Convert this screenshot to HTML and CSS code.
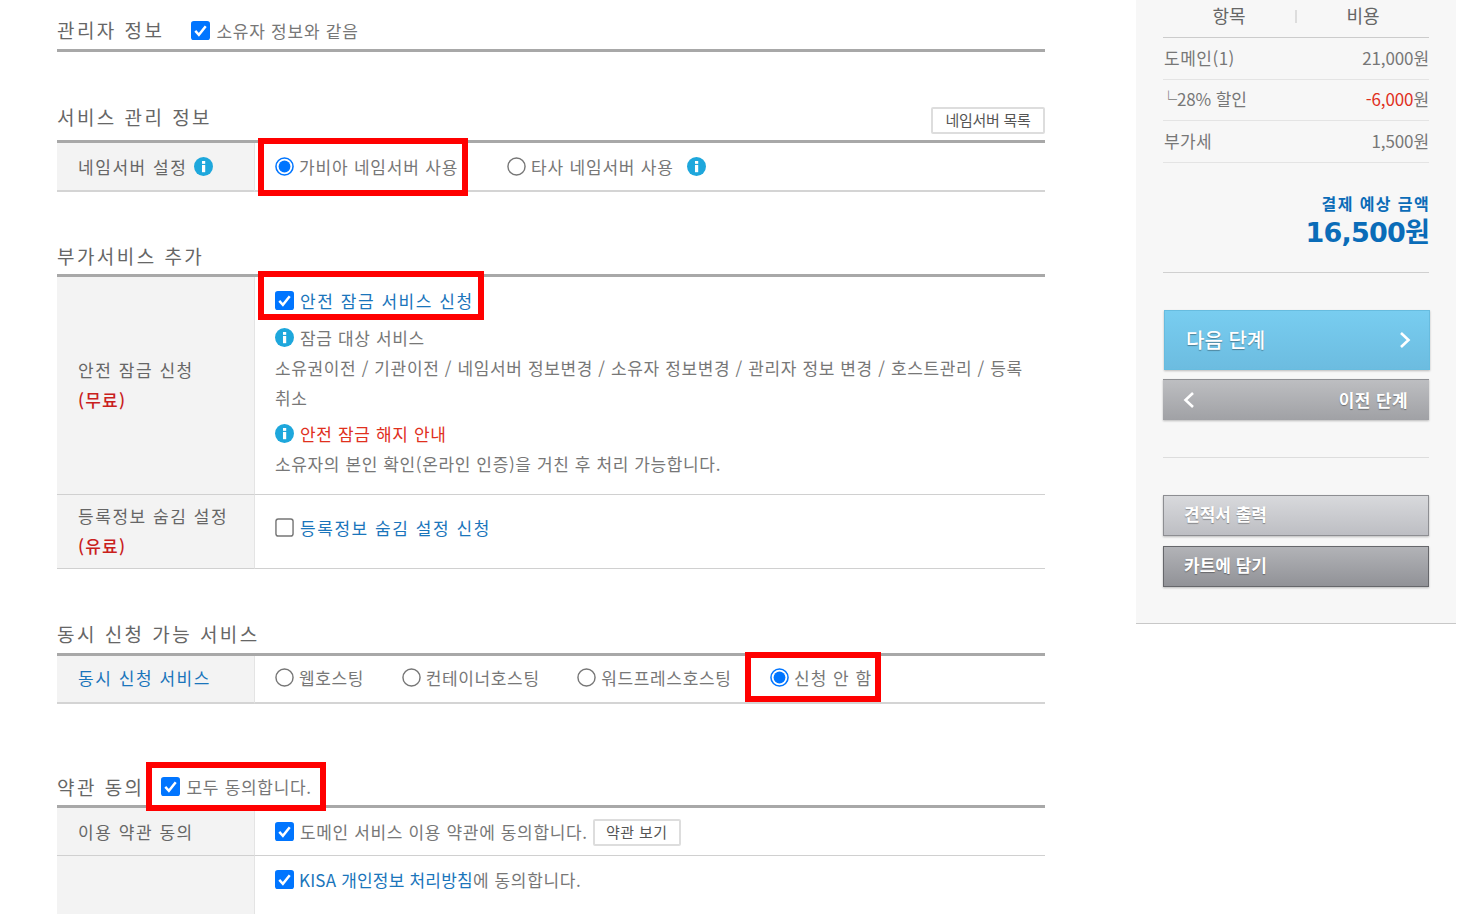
FILE: index.html
```html
<!DOCTYPE html>
<html lang="ko">
<head>
<meta charset="utf-8">
<title>도메인 신청</title>
<link rel="stylesheet" href="styles.css">
</head>
<body>
<svg class="defs" width="0" height="0" aria-hidden="true">
  <symbol id="chk" viewBox="0 0 20 20"><rect width="20" height="20" rx="3" fill="#0075ff"/><path d="M4.5 10.5 8.3 14.5 15.5 5.5" fill="none" stroke="#fff" stroke-width="2.6"/></symbol>
  <symbol id="unchk" viewBox="0 0 20 20"><rect x="1" y="1" width="18" height="18" rx="2.5" fill="#fff" stroke="#767676" stroke-width="1.5"/></symbol>
  <symbol id="on" viewBox="0 0 20 20"><circle cx="10" cy="10" r="9" fill="#fff" stroke="#0075ff" stroke-width="1.6"/><circle cx="10" cy="10" r="6.2" fill="#0075ff"/></symbol>
  <symbol id="off" viewBox="0 0 20 20"><circle cx="10" cy="10" r="9" fill="#fff" stroke="#767676" stroke-width="1.5"/></symbol>
  <symbol id="info" viewBox="0 0 20 20"><circle cx="10" cy="10" r="10" fill="#1ea7dc"/><rect x="8.4" y="8.4" width="3.4" height="7.6" fill="#fff"/><rect x="8.4" y="4.2" width="3.4" height="3" fill="#fff"/></symbol>
</svg>
<div class="page">
  <main class="form">
    <div class="head head-1">
      <h2 class="title">관리자 정보</h2>
      <label class="opt opt-same"><svg class="box"><use href="#chk"/></svg><span>소유자 정보와 같음</span></label>
    </div>

    <div class="head head-2">
      <h2 class="title">서비스 관리 정보</h2>
      <button class="mini mini-ns">네임서버 목록</button>
    </div>
    <div class="row row-ns">
      <div class="th">네임서버 설정 <svg class="info"><use href="#info"/></svg></div>
      <div class="td td-line td-ns">
        <label class="opt opt-radio"><svg class="box"><use href="#on"/></svg><span>가비아 네임서버 사용</span><i class="mark mark-gabia"></i></label>
        <label class="opt opt-radio"><svg class="box"><use href="#off"/></svg><span>타사 네임서버 사용</span><svg class="info info-other"><use href="#info"/></svg></label>
      </div>
    </div>

    <div class="head head-3"><h2 class="title">부가서비스 추가</h2></div>
    <div class="row row-lock">
      <div class="th th-2"><span>안전 잠금 신청</span><em>(무료)</em></div>
      <div class="td td-lock">
        <label class="opt opt-blue"><svg class="box"><use href="#chk"/></svg><span>안전 잠금 서비스 신청</span><i class="mark mark-lock"></i></label>
        <p class="note note-1"><svg class="info"><use href="#info"/></svg><span>잠금 대상 서비스</span></p>
        <p class="para">소유권이전 / 기관이전 / 네임서버 정보변경 / 소유자 정보변경 / 관리자 정보 변경 / 호스트관리 / 등록 취소</p>
        <p class="note note-2"><svg class="info"><use href="#info"/></svg><span class="red">안전 잠금 해지 안내</span></p>
        <p class="para">소유자의 본인 확인(온라인 인증)을 거친 후 처리 가능합니다.</p>
      </div>
    </div>
    <div class="row row-hide">
      <div class="th th-2"><span>등록정보 숨김 설정</span><em>(유료)</em></div>
      <div class="td td-line td-hide">
        <label class="opt opt-blue"><svg class="box"><use href="#unchk"/></svg><span>등록정보 숨김 설정 신청</span></label>
      </div>
    </div>

    <div class="head head-4"><h2 class="title">동시 신청 가능 서비스</h2></div>
    <div class="row row-multi">
      <div class="th th-blue">동시 신청 서비스</div>
      <div class="td td-line td-tight">
        <label class="opt opt-radio"><svg class="box"><use href="#off"/></svg><span>웹호스팅</span></label>
        <label class="opt opt-radio"><svg class="box"><use href="#off"/></svg><span>컨테이너호스팅</span></label>
        <label class="opt opt-radio"><svg class="box"><use href="#off"/></svg><span>워드프레스호스팅</span></label>
        <label class="opt opt-radio opt-none"><svg class="box"><use href="#on"/></svg><span>신청 안 함</span><i class="mark mark-none"></i></label>
      </div>
    </div>

    <div class="head head-5">
      <h2 class="title">약관 동의</h2>
      <label class="opt opt-all"><svg class="box"><use href="#chk"/></svg><span>모두 동의합니다.</span><i class="mark mark-all"></i></label>
    </div>
    <div class="row row-terms">
      <div class="th">이용 약관 동의</div>
      <div class="td td-line">
        <label class="opt opt-tight"><svg class="box"><use href="#chk"/></svg><span>도메인 서비스 이용 약관에 동의합니다.</span></label>
        <button class="mini mini-terms">약관 보기</button>
      </div>
    </div>
    <div class="row row-kisa">
      <div class="th"></div>
      <div class="td td-kisa">
        <label class="opt opt-radio"><svg class="box"><use href="#chk"/></svg><span><b class="link">KISA 개인정보 처리방침</b>에 동의합니다.</span></label>
      </div>
    </div>
  </main>

  <aside class="side">
    <div class="cols"><span>항목</span><i class="cols-bar"></i><span>비용</span></div>
    <div class="line"><span class="ko-1">도메인(1)</span><span>21,000원</span></div>
    <div class="line"><span class="sale">└28% 할인</span><span><span class="red">-6,000</span>원</span></div>
    <div class="line"><span class="ko-2">부가세</span><span>1,500원</span></div>
    <div class="total">
      <div class="total-label">결제 예상 금액</div>
      <div class="total-num">16,500원</div>
    </div>
    <a class="btn btn-next"><span>다음 단계</span><svg class="chev" viewBox="0 0 12 18"><path d="M2 2 9.5 9 2 16" fill="none" stroke="#fff" stroke-width="2.6"/></svg></a>
    <a class="btn btn-prev"><svg class="chev" viewBox="0 0 12 18"><path d="M10 2 2.5 9 10 16" fill="none" stroke="#fff" stroke-width="2.6"/></svg><span>이전 단계</span></a>
    <div class="sep"></div>
    <a class="btn btn-quote">견적서 출력</a>
    <a class="btn btn-cart">카트에 담기</a>
  </aside>
</div>
</body>
</html>
```

FILE: styles.css
```css
* { box-sizing: border-box; }
html, body { margin: 0; padding: 0; height: 914px; overflow: hidden; background: #fff; }
body { font-family: "Noto Sans CJK KR", "Noto Sans", sans-serif; font-size: 16px; color: #777; }
.defs { position: absolute; }
p { margin: 0; }
em { font-style: normal; }
.page { display: flex; padding-left: 57px; height: 914px; align-items: flex-start; }
.form { width: 988px; flex: none; }

.head { display: flex; align-items: center; border-bottom: 3px solid #a8a8a8; }
.head-1 { height: 52px; padding-top: 10px; }
.head-2 { height: 91px; padding-top: 41px; justify-content: space-between; }
.head-3 { height: 85px; padding-top: 44px; }
.head-4 { height: 87px; padding-top: 44px; }
.head-5 { height: 104px; padding-top: 64px; }
.title { margin: 0; font-size: 19px; font-weight: 400; color: #666; letter-spacing: 2.45px; white-space: nowrap; }

.row { display: flex; }
.row-ns { height: 49px; }
.row-lock { height: 218px; }
.row-hide { height: 74px; }
.row-multi { height: 48px; }
.row-terms { height: 48px; }
.row-kisa { height: 60px; }

.th { width: 198px; flex: none; background: #f3f3f3; border-right: 1px solid #e4e4e4; border-bottom: 1px solid #d0d0d0; padding-left: 21px; display: flex; align-items: center; color: #666; font-size: 17px; letter-spacing: 1.55px; gap: 7px; }
.th-2 { flex-direction: column; align-items: flex-start; justify-content: center; gap: 5px; padding-bottom: 2px; }
.th-2 em { color: #c9201c; font-weight: 500; font-size: 17px; letter-spacing: 1.2px; }
.th-blue { color: #1a75bb; padding-bottom: 3px; }
.row-ns .th, .row-ns .td, .row-multi .td, .row-multi .th { border-bottom: 2px solid #d4d4d4; }
.td { flex: 1; border-bottom: 1px solid #d0d0d0; padding-left: 20px; min-width: 0; }
.td-line { display: flex; align-items: center; gap: 39px; }
.td-ns { gap: 49px; }
.td-ns .opt { letter-spacing: .8px; }
.td-hide { padding-bottom: 8px; }
.td-tight { gap: 37.5px; padding-bottom: 3px; }
.td-lock { padding: 11px 20px 0 20px; }
.td-kisa { padding-top: 11px; border-bottom: 0; }
.row-kisa .th { border-bottom: 0; }

.opt { position: relative; display: inline-flex; align-items: center; gap: 6px; font-size: 17px; letter-spacing: .65px; white-space: nowrap; color: #777; }
.opt-radio { gap: 5px; }
.box { width: 19px; height: 19px; flex: none; }
.info { width: 19px; height: 19px; flex: none; }
.info-other { margin-left: 8px; }
.opt-same { margin-left: 27px; margin-top: 2px; letter-spacing: .75px; }
.opt-all { margin-left: 16px; gap: 7px; letter-spacing: .7px; }
.opt-none { letter-spacing: 1px; margin-left: 1px; }
.opt-blue { color: #1a75bb; letter-spacing: 1.55px; }
.opt-tight { margin-right: -34px; }
.link { font-weight: 400; color: #1a75bb; letter-spacing: .2px; }
.red { color: #e0301e; }

.note { display: flex; align-items: center; gap: 6px; font-size: 17px; height: 31px; padding-bottom: 1px; letter-spacing: .65px; }
.note-1 { margin-top: 7px; }
.note-2 { margin-top: 5px; }
.para { font-size: 17px; line-height: 30px; letter-spacing: .62px; }

.mark { position: absolute; border: 6px solid #f00; pointer-events: none; }
.mark-gabia { left: -17px; top: -16px; width: 210px; height: 58px; }
.mark-lock { left: -17px; top: -17px; width: 226px; height: 49px; }
.mark-none { left: -25px; top: -13px; width: 136px; height: 50px; }
.mark-all { left: -15px; top: -12px; width: 180px; height: 49px; }

.mini { font: inherit; font-size: 15px; color: #555; background: #fff; border: 2px solid #ddd; border-radius: 2px; letter-spacing: -.3px; height: 27px; padding: 0 0 2px; display: flex; align-items: center; justify-content: center; }
.mini-ns { width: 114px; margin-bottom: -8px; }
.mini-terms { width: 88px; letter-spacing: .4px; margin-top: 2px; }

.side { width: 320px; flex: none; margin-left: 91px; height: 624px; background: #f7f7f7; border-bottom: 1px solid #c8c8c8; padding: 0 27px; }
.cols { display: flex; height: 38px; border-bottom: 1px solid #ccc; font-size: 18px; color: #666; }
.cols span { flex: 1; text-align: center; line-height: 30px; }
.cols-bar { width: 2px; height: 13px; margin-top: 10px; background: #ddd; flex: none; }
.line { display: flex; justify-content: space-between; align-items: center; height: 41.6px; padding-bottom: 2px; border-bottom: 1px solid #e4e4e4; font-size: 17px; letter-spacing: -.1px; color: #777; }
.ko-1 { letter-spacing: .5px; padding-left: 1px; }
.ko-2 { letter-spacing: .3px; padding-left: 1px; }
.sale { margin-left: -3px; }
.total { height: 110px; border-bottom: 1px solid #d0d0d0; text-align: right; padding-top: 26px; }
.total-label { font-size: 16px; font-weight: 700; color: #0a6cb8; line-height: 28px; letter-spacing: 1.4px; margin-right: -1px; }
.total-num { font-size: 27px; font-weight: 700; color: #0a6cb8; line-height: 32px; font-family: "DejaVu Sans", "Noto Sans CJK KR", sans-serif; letter-spacing: -.8px; }

.btn { display: flex; align-items: center; justify-content: space-between; color: #fff; font-weight: 700; text-shadow: 0 1px 1px rgba(0,0,0,.35); font-size: 17px; box-shadow: 0 1px 2px rgba(0,0,0,.25); }
.chev { width: 12px; height: 18px; flex: none; }
.btn-next { margin: 37px -1px 0 1px; height: 60px; padding: 0 18px 0 21px; background: linear-gradient(#78cdf0, #6cbce0); font-size: 20px; font-weight: 500; border: 1px solid #67bcdf; }
.btn-prev { margin-top: 9px; height: 41px; padding: 0 21px 0 20px; background: linear-gradient(#bdbec1, #a0a1a5); border-top: 1px solid #8f9094; letter-spacing: .4px; }
.sep { margin-top: 37px; height: 1px; background: #ddd; }
.btn-quote { margin-top: 37px; height: 41px; padding: 0 0 3px 20px; background: linear-gradient(#d8d9dc, #bdbec3); border: 1px solid #8d8e92; }
.btn-cart { margin-top: 10px; height: 41px; padding: 0 0 3px 20px; background: linear-gradient(#b2b3b7, #919297); border: 1px solid #66676b; }
```
